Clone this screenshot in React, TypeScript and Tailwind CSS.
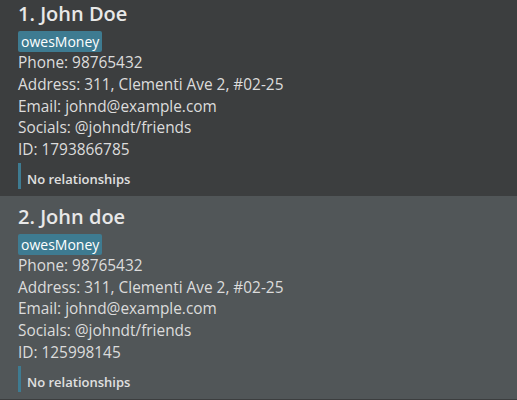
import React from "react";

type Person = {
  index: number;
  name: string;
  tags: string[];
  phone: string;
  address: string;
  email: string;
  socials: string;
  id: string;
};

const people: Person[] = [
  {
    index: 1,
    name: "John Doe",
    tags: ["owesMoney"],
    phone: "98765432",
    address: "311, Clementi Ave 2, #02-25",
    email: "johnd@example.com",
    socials: "@johndt/friends",
    id: "1793866785",
  },
  {
    index: 2,
    name: "John doe",
    tags: ["owesMoney"],
    phone: "98765432",
    address: "311, Clementi Ave 2, #02-25",
    email: "johnd@example.com",
    socials: "@johndt/friends",
    id: "125998145",
  },
];

const PersonCard = ({ person, odd }: { person: Person; odd: boolean }) => {
  return (
    <div
      className={`px-[18px] pt-[7px] pb-[7px] ${odd ? "bg-[#3c3e3f]" : "bg-[#515658]"}`}
    >
      <h1 className="text-[20px] leading-[28px] font-semibold text-[#e8e8e8]">
        {person.index}. {person.name}
      </h1>
      <div className="flex gap-1 mt-[3px]">
        {person.tags.map((tag) => (
          <span
            key={tag}
            className="bg-[#3e7b91] text-white text-[14px] leading-[21px] px-[3px] rounded-[2px]"
          >
            {tag}
          </span>
        ))}
      </div>
      <div className="text-[15.4px] leading-[21.75px] text-[#dcdcdc]">
        <div>Phone: {person.phone}</div>
        <div>Address: {person.address}</div>
        <div>Email: {person.email}</div>
        <div>Socials: {person.socials}</div>
        <div>ID: {person.id}</div>
      </div>
      <div className="mt-[2px] h-[26px] border-l-[3px] border-[#3e7b91] pl-[6px] flex items-end">
        <span className="text-[13px] leading-[20px] font-semibold text-[#e0e0e0]">
          No relationships
        </span>
      </div>
    </div>
  );
};

export default function App() {
  return (
    <div
      className="w-[517px] h-[400px] overflow-hidden bg-[#3c3e3f]"
      style={{ fontFamily: '"Open Sans", "Noto Sans", sans-serif' }}
    >
      <div className="-mt-[7px]">
        {people.map((p, i) => (
          <PersonCard key={p.id} person={p} odd={i % 2 === 0} />
        ))}
      </div>
    </div>
  );
}
